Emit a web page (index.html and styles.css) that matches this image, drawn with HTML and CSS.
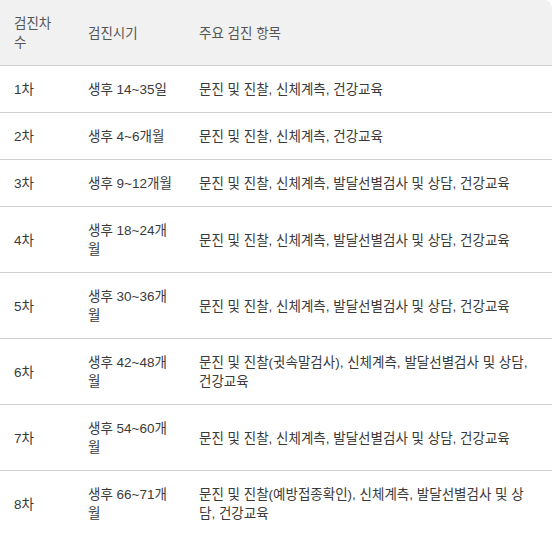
FILE: index.html
```html
<!DOCTYPE html>
<html lang="ko">
<head>
<meta charset="utf-8">
<link rel="stylesheet" href="styles.css">
</head>
<body>
<table class="checkup">
  <colgroup>
    <col class="c1"><col class="c2"><col class="c3">
  </colgroup>
  <thead>
    <tr><th>검진차수</th><th>검진시기</th><th>주요 검진 항목</th></tr>
  </thead>
  <tbody>
    <tr><td>1차</td><td>생후 14~35일</td><td>문진 및 진찰, 신체계측, 건강교육</td></tr>
    <tr><td>2차</td><td>생후 4~6개월</td><td>문진 및 진찰, 신체계측, 건강교육</td></tr>
    <tr><td>3차</td><td>생후 9~12개월</td><td>문진 및 진찰, 신체계측, 발달선별검사 및 상담, 건강교육</td></tr>
    <tr><td>4차</td><td>생후 18~24개월</td><td>문진 및 진찰, 신체계측, 발달선별검사 및 상담, 건강교육</td></tr>
    <tr><td>5차</td><td>생후 30~36개월</td><td>문진 및 진찰, 신체계측, 발달선별검사 및 상담, 건강교육</td></tr>
    <tr><td>6차</td><td>생후 42~48개월</td><td>문진 및 진찰(귓속말검사), 신체계측, 발달선별검사 및 상담, 건강교육</td></tr>
    <tr><td>7차</td><td>생후 54~60개월</td><td>문진 및 진찰, 신체계측, 발달선별검사 및 상담, 건강교육</td></tr>
    <tr><td>8차</td><td>생후 66~71개월</td><td>문진 및 진찰(예방접종확인), 신체계측, 발달선별검사 및 상담, 건강교육</td></tr>
  </tbody>
</table>
</body>
</html>
```
FILE: styles.css
```css
html, body {
  margin: 0;
  padding: 0;
  background: #fff;
}
.checkup {
  width: 552px;
  border-collapse: collapse;
  table-layout: fixed;
  font-family: "Liberation Sans", "Noto Sans CJK KR", sans-serif;
  font-size: 13.5px;
  line-height: 19px;
  color: #3a3a3a;
}
.c1 { width: 74px; }
.c2 { width: 111px; }
.c3 { width: 367px; }
.checkup th,
.checkup td {
  text-align: left;
  vertical-align: middle;
  padding: 14px 16px 13px 14px;
  border-bottom: 1px solid #cfcfcf;
  font-weight: normal;
  word-break: break-all;
}
.checkup th {
  background: #f1f1f1;
  color: #555;
}
.checkup th:last-child {
  border-top-right-radius: 8px;
}
.checkup td:first-child,
.checkup th:first-child { padding-right: 14px; }
.checkup td:nth-child(2),
.checkup th:nth-child(2) { padding-right: 10px; }
```
